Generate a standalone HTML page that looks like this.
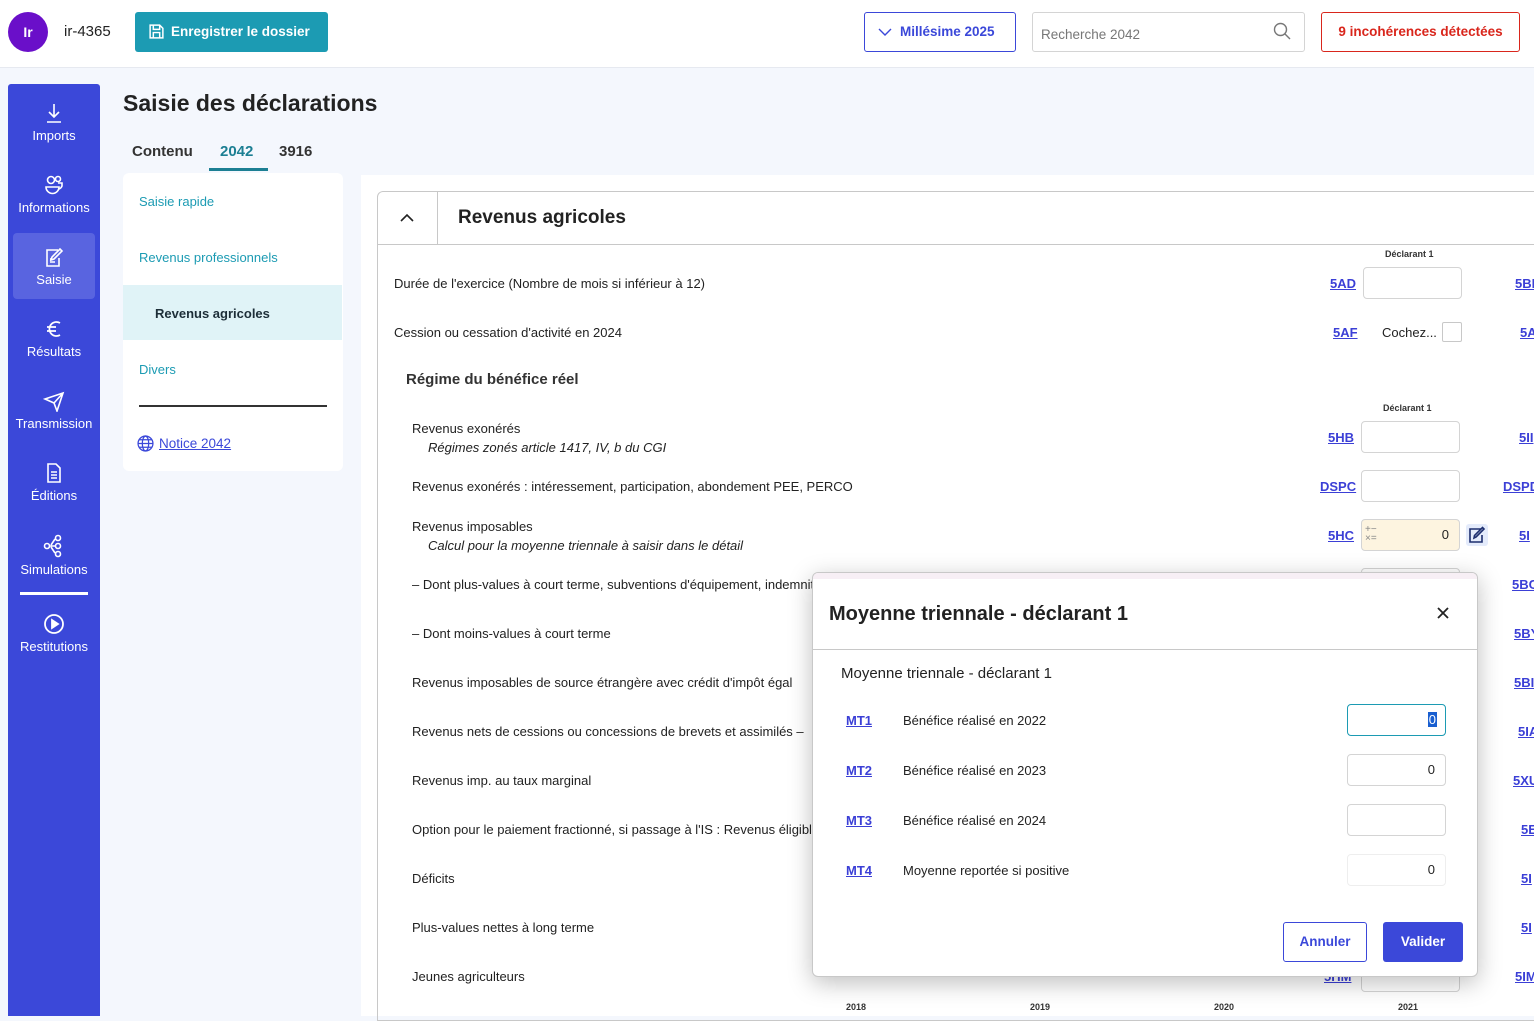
<!DOCTYPE html>
<html><head><meta charset="utf-8"><style>
*{box-sizing:border-box;margin:0;padding:0}
body{width:1534px;height:1016px;overflow:hidden;background:#f4f7fd;font-family:"Liberation Sans",sans-serif;color:#222;position:relative;font-size:13px}
.a{position:absolute}
.top{left:0;top:0;width:1534px;height:68px;background:#fff;border-bottom:1px solid #e6e9f0}
.side{left:8px;top:84px;width:92px;height:932px;background:#3b48d9;border-radius:3px 3px 0 0}
.si{position:absolute;left:0;width:92px;text-align:center;color:#fff;font-size:13px}
.si svg{display:block;margin:0 auto 4px}
.code{position:absolute;color:#3b3fd6;font-weight:bold;text-decoration:underline;font-size:13px}
.inp{position:absolute;width:99px;height:32px;border:1px solid #d4d4d4;border-radius:4px;background:#fff}
.lab{position:absolute;font-size:13px;color:#222;white-space:nowrap}
.it{font-style:italic}
</style></head><body>
<div class="a top"></div>
<div class="a" style="left:8px;top:12px;width:40px;height:40px;border-radius:50%;background:#6a0fc9;color:#fff;font-weight:bold;font-size:14px;line-height:40px;text-align:center">Ir</div>
<div class="a" style="left:64px;top:23px;font-size:15px">ir-4365</div>
<div class="a" style="left:135px;top:12px;width:193px;height:40px;background:#1c9bb3;border-radius:3px;color:#fff;font-weight:bold;font-size:13.5px;line-height:40px;padding-left:36px">Enregistrer le dossier
<svg class="a" style="left:13px;top:11px" width="17" height="17" viewBox="0 0 16 16" fill="none" stroke="#fff" stroke-width="1.4"><path d="M2 2h9l3 3v9H2z"/><path d="M5 2v4h6V2M5 14V9h6v5"/></svg></div>
<div class="a" style="left:864px;top:12px;width:152px;height:40px;border:1px solid #3b48d9;border-radius:3px;color:#3b48d9;font-weight:bold;font-size:13.5px;line-height:38px;padding-left:35px">Millésime 2025
<svg class="a" style="left:13px;top:13px" width="14" height="12" viewBox="0 0 14 12" fill="none" stroke="#3b48d9" stroke-width="1.4"><path d="M1 3l6 6 6-6"/></svg></div>
<div class="a" style="left:1032px;top:12px;width:273px;height:40px;border:1px solid #d4d4d4;border-radius:3px;color:#777;font-size:13.5px;line-height:44px;padding-left:8px">Recherche 2042
<svg class="a" style="left:240px;top:9px" width="18" height="18" viewBox="0 0 18 18" fill="none" stroke="#777" stroke-width="1.4"><circle cx="7.5" cy="7.5" r="6"/><path d="M12 12l5 5"/></svg></div>
<div class="a" style="left:1321px;top:12px;width:199px;height:40px;border:1px solid #d9261c;border-radius:3px;color:#d9261c;font-weight:bold;font-size:13.5px;line-height:38px;text-align:center">9 incohérences détectées</div>

<div class="a side">
<div class="si" style="top:18px"><svg width="20" height="22" viewBox="0 0 20 22" fill="none" stroke="#fff" stroke-width="1.6"><path d="M10 2v13M5 10l5 5 5-5M3 20h14"/></svg>Imports</div>
<div class="si" style="top:90px"><svg width="22" height="22" viewBox="0 0 22 22" fill="none" stroke="#fff" stroke-width="1.6"><circle cx="8" cy="6" r="3.5"/><circle cx="15" cy="5" r="2.5"/><path d="M3 13h13a5 5 0 0 1-13 0zM15 9h4v3a5 5 0 0 1-3 3"/></svg>Informations</div>
<div class="si" style="top:149px;left:5px;width:82px;height:66px;background:#5964e0;border-radius:4px"></div>
<div class="si" style="top:162px"><svg width="20" height="22" viewBox="0 0 20 22" fill="none" stroke="#fff" stroke-width="1.6"><path d="M14 4H3v16h12v-8"/><path d="M10 13l8-8-2-2-8 8-1 3z"/><path d="M6 13h1M6 16h5"/></svg>Saisie</div>
<div class="si" style="top:234px"><svg width="20" height="22" viewBox="0 0 20 22" fill="none" stroke="#fff" stroke-width="1.7"><path d="M16 5a7 7 0 1 0 0 12M3 9h9M3 13h9"/></svg>Résultats</div>
<div class="si" style="top:306px"><svg width="22" height="22" viewBox="0 0 22 22" fill="none" stroke="#fff" stroke-width="1.6"><path d="M2 9l18-6-6 18-3-8z M11 13l9-10"/></svg>Transmission</div>
<div class="si" style="top:378px"><svg width="18" height="22" viewBox="0 0 18 22" fill="none" stroke="#fff" stroke-width="1.6"><path d="M3 2h8l4 4v14H3z"/><path d="M6 10h6M6 13h6M6 16h6"/></svg>Éditions</div>
<div class="si" style="top:450px"><svg width="22" height="24" viewBox="0 0 22 24" fill="none" stroke="#fff" stroke-width="1.6"><circle cx="4" cy="12" r="2.5"/><circle cx="15" cy="4" r="2.5"/><circle cx="15" cy="12" r="2.5"/><circle cx="15" cy="20" r="2.5"/><path d="M6.5 12h6M12 5l-4 6M12 19l-4-6"/></svg>Simulations</div>
<div class="a" style="left:12px;top:508px;width:68px;height:3px;background:#fff"></div>
<div class="si" style="top:529px"><svg width="22" height="22" viewBox="0 0 22 22" fill="none" stroke="#fff" stroke-width="1.8"><circle cx="11" cy="11" r="9"/><path d="M9 7v8l6-4z" fill="#fff"/></svg>Restitutions</div>
</div>

<div class="a" style="left:123px;top:90px;font-size:23px;font-weight:bold;color:#222">Saisie des déclarations</div>
<div class="a" style="left:132px;top:143px;font-size:15px;font-weight:bold;color:#333">Contenu</div>
<div class="a" style="left:220px;top:143px;font-size:15px;font-weight:bold;color:#1c7f93">2042</div>
<div class="a" style="left:209px;top:168px;width:59px;height:3px;background:#1c7f93"></div>
<div class="a" style="left:279px;top:143px;font-size:15px;font-weight:bold;color:#333">3916</div>

<div class="a" style="left:123px;top:173px;width:220px;height:298px;background:#fff;border-radius:6px"></div>
<div class="a" style="left:139px;top:194px;color:#1c9bb3">Saisie rapide</div>
<div class="a" style="left:139px;top:250px;color:#1c9bb3">Revenus professionnels</div>
<div class="a" style="left:123px;top:285px;width:219px;height:55px;background:#e0f3f7"></div>
<div class="a" style="left:155px;top:306px;font-weight:bold;color:#1d2e38">Revenus agricoles</div>
<div class="a" style="left:139px;top:362px;color:#1c9bb3">Divers</div>
<div class="a" style="left:139px;top:405px;width:188px;height:2px;background:#333"></div>
<svg class="a" style="left:137px;top:435px" width="17" height="17" viewBox="0 0 16 16" fill="none" stroke="#3b48d9" stroke-width="1.2"><circle cx="8" cy="8" r="7"/><ellipse cx="8" cy="8" rx="3" ry="7"/><path d="M1 8h14M2 4.5h12M2 11.5h12"/></svg>
<div class="a" style="left:159px;top:436px;color:#3b48d9;text-decoration:underline;font-size:13.5px">Notice 2042</div>

<div class="a" style="left:361px;top:175px;width:1173px;height:841px;background:#fff"></div>
<div class="a" style="left:377px;top:191px;width:1170px;height:830px;border:1px solid #c8c8c8;border-radius:6px 0 0 0"></div>
<div class="a" style="left:377px;top:244px;width:1157px;height:1px;background:#c8c8c8"></div>
<div class="a" style="left:437px;top:191px;width:1px;height:53px;background:#c8c8c8"></div>
<svg class="a" style="left:399px;top:212px" width="16" height="12" viewBox="0 0 16 12" fill="none" stroke="#222" stroke-width="1.6"><path d="M2 9l6-6 6 6"/></svg>
<div class="a" style="left:458px;top:207px;font-size:19px;font-weight:bold;color:#222">Revenus agricoles</div>

<div class="a" style="left:1385px;top:249px;font-size:9px;color:#333;font-weight:bold">Déclarant 1</div>
<div class="lab" style="left:394px;top:276px">Durée de l'exercice (Nombre de mois si inférieur à 12)</div>
<div class="code" style="left:1330px;top:276px">5AD</div><div class="inp" style="left:1363px;top:267px"></div><div class="code" style="left:1515px;top:276px">5BI</div>
<div class="lab" style="left:394px;top:325px">Cession ou cessation d'activité en 2024</div>
<div class="code" style="left:1333px;top:325px">5AF</div><div class="lab" style="left:1382px;top:325px">Cochez...</div>
<div class="a" style="left:1442px;top:322px;width:20px;height:20px;border:1px solid #c8c8c8;border-radius:2px"></div><div class="code" style="left:1520px;top:325px">5A</div>
<div class="lab" style="left:406px;top:371px;font-size:15px;font-weight:bold;color:#333">Régime du bénéfice réel</div>
<div class="a" style="left:1383px;top:403px;font-size:9px;color:#333;font-weight:bold">Déclarant 1</div>

<div class="lab" style="left:412px;top:421px">Revenus exonérés</div>
<div class="lab it" style="left:428px;top:440px">Régimes zonés article 1417, IV, b du CGI</div>
<div class="code" style="left:1328px;top:430px">5HB</div><div class="inp" style="left:1361px;top:421px"></div><div class="code" style="left:1519px;top:430px">5II</div>
<div class="lab" style="left:412px;top:479px">Revenus exonérés : intéressement, participation, abondement PEE, PERCO</div>
<div class="code" style="left:1320px;top:479px">DSPC</div><div class="inp" style="left:1361px;top:470px"></div><div class="code" style="left:1503px;top:479px">DSPD</div>
<div class="lab" style="left:412px;top:519px">Revenus imposables</div>
<div class="lab it" style="left:428px;top:538px">Calcul pour la moyenne triennale à saisir dans le détail</div>
<div class="code" style="left:1328px;top:528px">5HC</div>
<div class="inp" style="left:1361px;top:519px;background:#fdf4e0;text-align:right;padding-right:10px;line-height:30px">0</div>
<div class="a" style="left:1365px;top:525px;color:#888;font-size:10px;line-height:9px">+−<br>×=</div>
<div class="a" style="left:1466px;top:524px;width:22px;height:22px;background:#e4ebfb;border-radius:3px"></div>
<svg class="a" style="left:1468px;top:526px" width="18" height="18" viewBox="0 0 18 18" fill="none" stroke="#1d2e6e" stroke-width="1.6"><path d="M13 3H2v13h12V9"/><path d="M8 11l8-8-1.5-1.5-8 8L6 12z"/></svg>
<div class="code" style="left:1519px;top:528px">5I</div>

<div class="lab" style="left:412px;top:577px">– Dont plus-values à court terme, subventions d'équipement, indemnités</div>
<div class="inp" style="left:1361px;top:568px"></div><div class="code" style="left:1512px;top:577px">5BC</div>
<div class="lab" style="left:412px;top:626px">– Dont moins-values à court terme</div><div class="code" style="left:1514px;top:626px">5BY</div>
<div class="lab" style="left:412px;top:675px">Revenus imposables de source étrangère avec crédit d'impôt égal</div><div class="code" style="left:1514px;top:675px">5BI</div>
<div class="lab" style="left:412px;top:724px">Revenus nets de cessions ou concessions de brevets et assimilés –</div><div class="code" style="left:1518px;top:724px">5IA</div>
<div class="lab" style="left:412px;top:773px">Revenus imp. au taux marginal</div><div class="code" style="left:1513px;top:773px">5XU</div>
<div class="lab" style="left:412px;top:822px">Option pour le paiement fractionné, si passage à l'IS : Revenus éligibles</div><div class="code" style="left:1521px;top:822px">5E</div>
<div class="lab" style="left:412px;top:871px">Déficits</div><div class="code" style="left:1521px;top:871px">5I</div>
<div class="lab" style="left:412px;top:920px">Plus-values nettes à long terme</div><div class="code" style="left:1521px;top:920px">5I</div>
<div class="lab" style="left:412px;top:969px">Jeunes agriculteurs</div><div class="code" style="left:1324px;top:969px">5HM</div><div class="inp" style="left:1361px;top:960px"></div><div class="code" style="left:1515px;top:969px">5IM</div>
<div class="a" style="left:846px;top:1002px;font-size:9px;font-weight:bold;color:#333">2018</div>
<div class="a" style="left:1030px;top:1002px;font-size:9px;font-weight:bold;color:#333">2019</div>
<div class="a" style="left:1214px;top:1002px;font-size:9px;font-weight:bold;color:#333">2020</div>
<div class="a" style="left:1398px;top:1002px;font-size:9px;font-weight:bold;color:#333">2021</div>

<div class="a" style="left:812px;top:572px;width:666px;height:405px;background:#fff;border:1px solid #c8c8c8;border-radius:6px;box-shadow:0 6px 24px rgba(0,0,0,.25);overflow:hidden">
<div class="a" style="left:0;top:0;width:666px;height:6px;background:#f7eff5"></div>
<div class="a" style="left:16px;top:30px;font-size:20px;font-weight:bold;color:#222">Moyenne triennale - déclarant 1</div>
<svg class="a" style="left:623px;top:33px" width="14" height="14" viewBox="0 0 14 14" stroke="#222" stroke-width="1.8"><path d="M2 2l10 10M12 2L2 12"/></svg>
<div class="a" style="left:0;top:76px;width:666px;height:1px;background:#c8c8c8"></div>
<div class="a" style="left:28px;top:92px;font-size:15px;color:#222">Moyenne triennale - déclarant 1</div>
<div class="code" style="left:33px;top:140px">MT1</div><div class="lab" style="left:90px;top:140px">Bénéfice réalisé en 2022</div>
<div class="inp" style="left:534px;top:131px;border:1.5px solid #1c9bb3;height:32px"><span class="a" style="right:8px;top:7px;background:#1a5fd0;color:#fff;padding:0 1px;font-size:13px">0</span></div>
<div class="code" style="left:33px;top:190px">MT2</div><div class="lab" style="left:90px;top:190px">Bénéfice réalisé en 2023</div>
<div class="inp" style="left:534px;top:181px;text-align:right;padding-right:10px;line-height:30px">0</div>
<div class="code" style="left:33px;top:240px">MT3</div><div class="lab" style="left:90px;top:240px">Bénéfice réalisé en 2024</div>
<div class="inp" style="left:534px;top:231px"></div>
<div class="code" style="left:33px;top:290px">MT4</div><div class="lab" style="left:90px;top:290px">Moyenne reportée si positive</div>
<div class="inp" style="left:534px;top:281px;border-color:#eee;text-align:right;padding-right:10px;line-height:30px">0</div>
<div class="a" style="left:470px;top:349px;width:84px;height:40px;border:1px solid #3b48d9;border-radius:3px;color:#3b48d9;font-weight:bold;font-size:13.5px;line-height:38px;text-align:center">Annuler</div>
<div class="a" style="left:570px;top:349px;width:80px;height:40px;background:#3b48d9;border-radius:3px;color:#fff;font-weight:bold;font-size:13.5px;line-height:40px;text-align:center">Valider</div>
</div>
</body></html>
